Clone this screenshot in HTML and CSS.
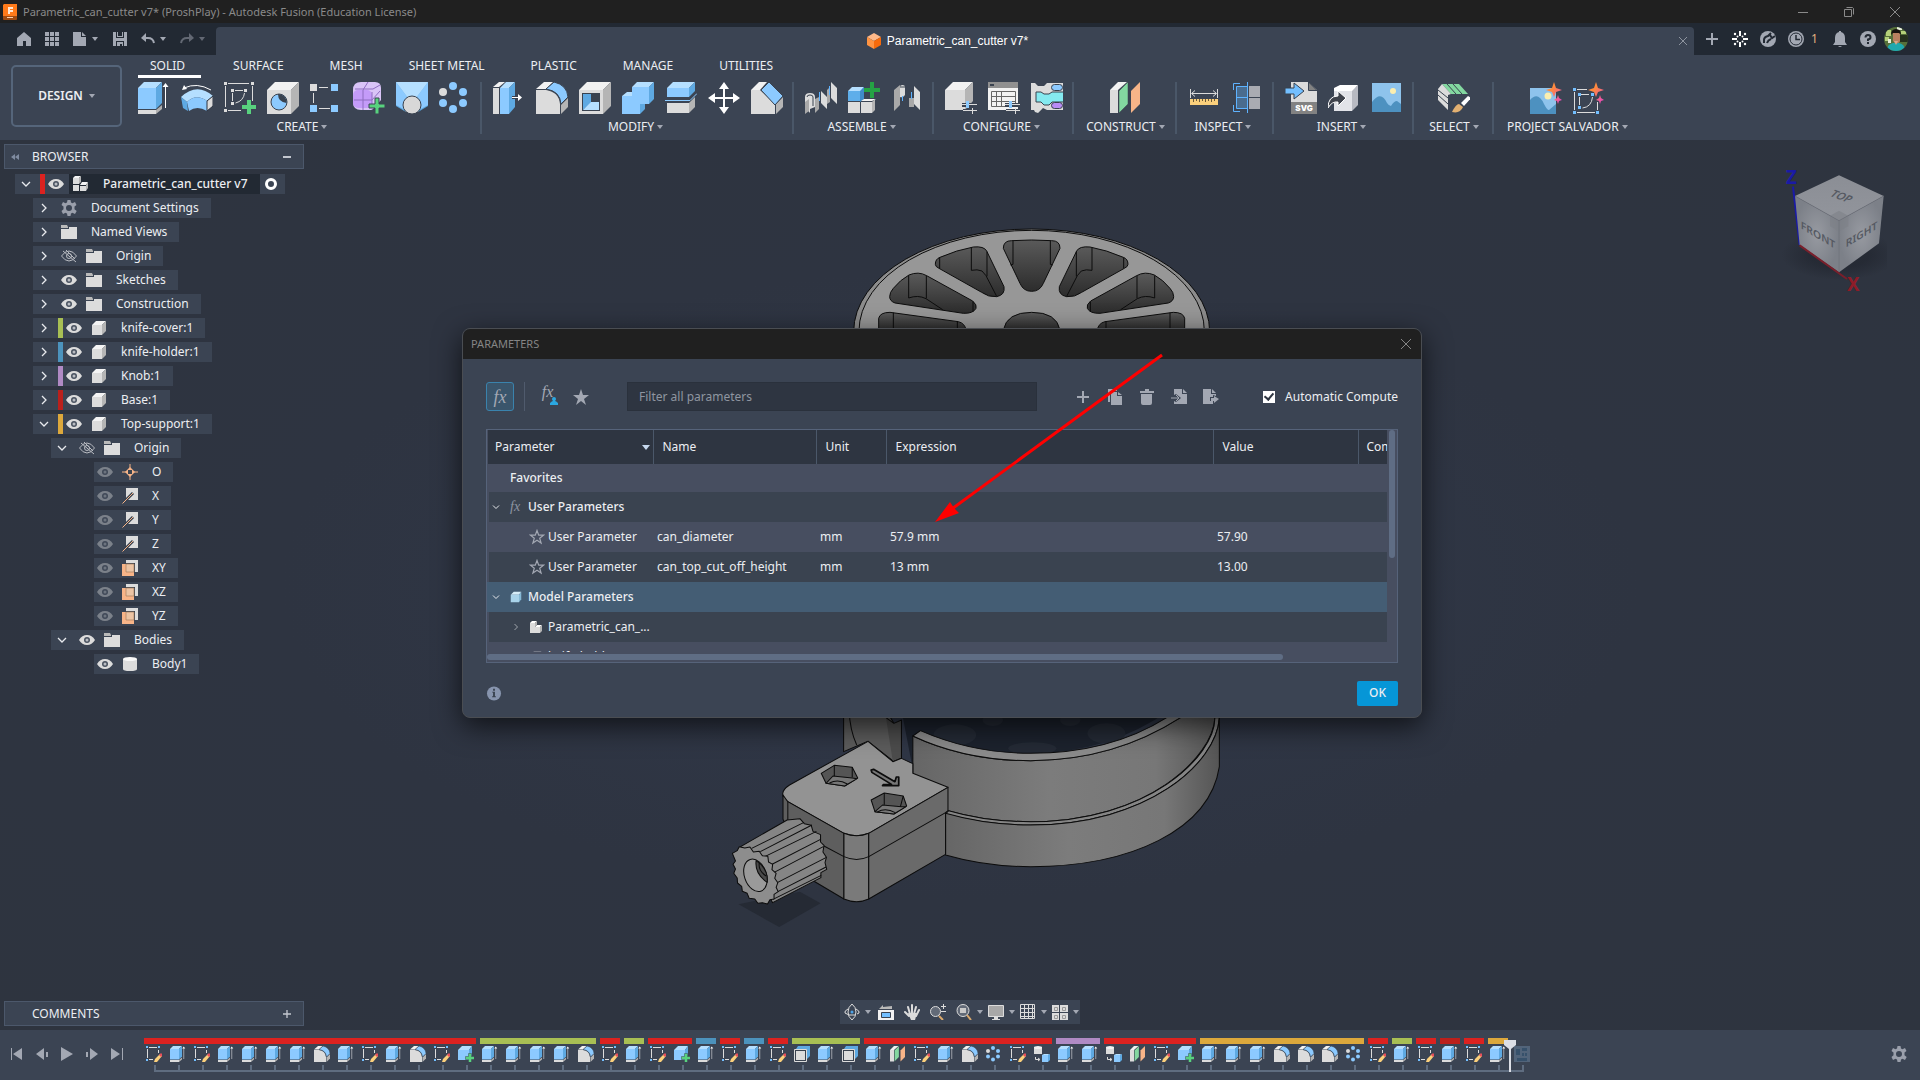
FILE: index.html
```html
<!DOCTYPE html>
<html lang="en">
<head>
<meta charset="utf-8">
<title>Parametric_can_cutter v7* (ProshPlay) - Autodesk Fusion (Education License)</title>
<link rel="stylesheet" href="styles.css">
</head>
<body>
<svg class="defs" aria-hidden="true">
  <defs>
    <linearGradient id="spark" x1="0" y1="0" x2="1" y2="1"><stop offset=".35" stop-color="#ff8a3c"/><stop offset="1" stop-color="#e83fd0"/></linearGradient>
    <linearGradient id="wall" x1="0" x2="1"><stop offset="0" stop-color="#666"/><stop offset=".45" stop-color="#7c7c7c"/><stop offset=".8" stop-color="#777"/><stop offset="1" stop-color="#555"/></linearGradient>
    <linearGradient id="pocket" x1="0" y1="0" x2="0" y2="1"><stop offset="0" stop-color="#5a5a5a"/><stop offset="1" stop-color="#2c2c2c"/></linearGradient>
    <linearGradient id="cubeTop" x1="0" y1="0" x2="0" y2="1"><stop offset="0" stop-color="#8b8e95"/><stop offset="1" stop-color="#92959c"/></linearGradient>
    <radialGradient id="cubeSide"><stop offset="0" stop-color="#979aa1"/><stop offset="1" stop-color="#7c8088"/></radialGradient>
    <radialGradient id="cubeShadow"><stop offset=".5" stop-color="#1d212a"/><stop offset="1" stop-color="#1d212a" stop-opacity="0"/></radialGradient>
  </defs>

  <symbol id="extrude" viewBox="0 0 32 32"><path fill="#b5dfff" d="M0 6 6 0h18l-6 6z"/><path fill="#8ccaff" d="M0 6h18v21H0z"/><path fill="#5ea9e2" d="m18 6 6-6v21l-6 6z"/><path fill="#dcdcdc" d="M0 28h18v4H0z"/><path fill="#b0b0b0" d="m18 28 6-5v4l-6 5z"/><path stroke="#fff" d="M27.500 4v22"/><path fill="#fff" d="m24.500 5 3-4 3 4z"/></symbol>
  <symbol id="revolve" viewBox="0 0 32 32"><path fill="#b5dfff" d="M0 15Q16 0 32 14l-6 5Q15 11 6 20z"/><path fill="#8ccaff" d="M6 20q9-9 20-1v10q-10-6-18 0z"/><path fill="#5ea9e2" d="m0 15 6 5 1 9-5-3z"/><path fill="#dcdcdc" stroke="#2b3340" d="m26 19 6-5v10l-6 5z"/><path fill="none" stroke="#fff" d="M3 6q13-6 27 2"/><path fill="#fff" d="m1 8 2-5 3 4z"/></symbol>
  <symbol id="sketch" viewBox="0 0 32 32"><path fill="none" stroke="#dcdcdc" d="M4 1.500h21M1.500 4v21M28.500 4v15M4 28.500h13M11 8.500h8M8.500 11v8M20.500 11q-1 8-9 10"/><path fill="#dcdcdc" d="M0 0h3v3H0zM27 0h3v3h-3zM0 27h3v3H0zM7 7h3v3H7zM20 7h3v3h-3zM7 20h3v3H7z"/><path fill="#58d27e" d="M23 18h4v5h5v4h-5v5h-4v-5h-5v-4h5z"/></symbol>
  <symbol id="hole" viewBox="0 0 32 32"><path fill="#f2f2f2" d="m0 8 8-8h24l-8 8z"/><path fill="#dcdcdc" d="M0 8h24v24H0z"/><path fill="#b5b5b5" d="m24 8 8-8v24l-8 8z"/><circle cx="12" cy="20" r="8" fill="#8ccaff" stroke="#39424f"/><path fill="#39424f" d="M11 12q0 8 8.500 9A8 8 0 0 0 11 12z"/></symbol>
  <symbol id="rectpat" viewBox="0 0 32 32"><path fill="#dcdcdc" d="M0 2h7v7H0zM9 5h9v1H9zM3 11h1v10H3zM9 26h11v1H9z"/><path fill="#8ccaff" d="M21 2h7v7h-7zM0 23h7v7H0zM21 23h7v7h-7z"/></symbol>
  <symbol id="form" viewBox="0 0 32 32"><path fill="#d9c4f7" d="M8 0h14q6 0 6 6v12q-8 10-10 10H8q-8 0-8-8V8q0-8 8-8z"/><rect y="8" width="19" height="18" rx="5" fill="#c49bf9"/><path fill="none" stroke="#8e6cc0" d="M1 18h18l8-9M10 8v20M10 8l5-8M19 10v16M2 7h18l7-4"/><path fill="#58d27e" stroke="#3b4453" d="M22 16h4v6h6v4h-6v6h-4v-6h-6v-4h6z"/></symbol>
  <symbol id="loft" viewBox="0 0 32 32"><path fill="#5ea9e2" d="M0 0h32v24L22 30H10L0 24z"/><path fill="#8ccaff" d="m0 0 12 16-3 12L0 23zM32 0 20 16l3 12 9-5z"/><path fill="#b5dfff" d="M0 0h32L20 16h-8z"/><circle cx="16" cy="23" r="9" fill="#d8d8d8" stroke="#39424f"/></symbol>
  <symbol id="circpat" viewBox="0 0 32 32"><g fill="#8ccaff"><circle cx="14" cy="4" r="4"/><circle cx="24" cy="10" r="4"/><circle cx="24" cy="21" r="4"/><circle cx="14" cy="27" r="4"/><circle cx="4" cy="21" r="4"/></g><circle cx="4" cy="10" r="4" fill="#dcdcdc"/></symbol>

  <symbol id="presspull" viewBox="0 0 32 32"><path fill="#dcdcdc" d="M0 6h6v26H0z"/><path fill="#f2f2f2" d="m0 5 6-5h6L6 5z"/><path fill="#b5dfff" d="m7 6 6-6h9l-6 6z"/><path fill="#8ccaff" d="M7 6h9v26H7z"/><path fill="#5ea9e2" d="m16 6 6-6v25l-6 7z"/><path stroke="#39424f" stroke-width="3" d="M19 15.500h9"/><path stroke="#fff" d="M19 15.500h8"/><path fill="#fff" d="m25 12 4 3.500-4 3.500z"/></symbol>
  <symbol id="fillet" viewBox="0 0 32 32"><path fill="#f2f2f2" d="m0 7 8-7h9l-7 7z"/><path fill="#dcdcdc" d="M0 8h10q13 2 14 14v10H0z"/><path fill="#b5b5b5" d="m25 23 7-7v9l-7 7z"/><path fill="#8ccaff" stroke="#39424f" d="m10 7 8-7q13 3 14 15l-7 7Q24 9 10 7z"/></symbol>
  <symbol id="shell" viewBox="0 0 32 32"><path fill="#f2f2f2" d="m0 8 8-8h24l-8 8z"/><path fill="#dcdcdc" d="M0 8h24v24H0z"/><path fill="#b5b5b5" d="m24 8 8-8v24l-8 8z"/><path fill="#39424f" d="M3 11h18v18H3z"/><path fill="#5ea9e2" d="m4 12 8 0v9l-8 7z"/><path fill="#b5dfff" d="m4 28 8-8h8v8z"/></symbol>
  <symbol id="combine" viewBox="0 0 32 32"><path fill="#b5dfff" d="m10 5 5-5h17l-5 5zM0 14l5-4h5v4z"/><path fill="#8ccaff" d="M0 14h10V5h17v17h-9v10H0z"/><path fill="#5ea9e2" d="m27 5 5-5v17l-5 5zM18 22h5v5l-5 5z"/></symbol>
  <symbol id="split" viewBox="0 0 32 32"><path fill="#b5dfff" d="m2 6 6-6h22l-6 6z"/><path fill="#8ccaff" d="M2 6h22v9H2z"/><path fill="#5ea9e2" d="m24 6 6-6v9l-6 6z"/><path fill="none" stroke="#8ccaff" d="M0 18.500h25l7-7"/><path fill="#dcdcdc" d="M2 21h22v10H2z"/><path fill="#b5b5b5" d="m24 21 6-6v10l-6 6z"/></symbol>
  <symbol id="move" viewBox="0 0 32 32"><path fill="#fff" d="m16 0 5 7h-4v8h8v-4l7 5-7 5v-4h-8v8h4l-5 7-5-7h4v-8H7v4l-7-5 7-5v4h8V7h-4z"/></symbol>
  <symbol id="chamfer" viewBox="0 0 32 32"><path fill="#f2f2f2" d="m0 8 8-8h8l-7 8z"/><path fill="#dcdcdc" d="M0 8h9l15 14v10H0z"/><path fill="#b5b5b5" d="m25 22 7-7v10l-7 7z"/><path fill="#8ccaff" stroke="#39424f" d="m10 8 8-8 14 14-8 9z"/></symbol>

  <symbol id="joint" viewBox="0 0 32 32"><path fill="#dcdcdc" d="M0 15q0-4 5-4t5 4v10l-5 2v4l-5-6zM16 9l6 6v12l-6-6zM26 0l6 6v16l-6-6z"/><path fill="#a9a9a9" d="m0 20 4-3v12l-4 3zM10 17l4-2v12l-4 4zM22 8l3-3v15l-3 2z"/><path fill="none" stroke="#39424f" d="M2 15q0-2 3-2t3 2v9"/><path stroke="#5eb3ff" d="M14.500 10v9M24.500 4v9"/></symbol>
  <symbol id="newcomp" viewBox="0 0 32 32"><path fill="#b5dfff" d="m0 9 4-4h12l-3 4z"/><path fill="#5eaeea" d="M0 9h12v10H0z"/><path fill="#3f8bc8" d="m12 9 4-4v12l-4 3z"/><path fill="#dcdcdc" d="M0 20h12v11H0zM13 20h11v11H13z"/><path fill="#f2f2f2" d="m13 19 3-2h12l-4 2z"/><path fill="#b5b5b5" d="m24 20 3-3v11l-3 3z"/><path fill="#25a244" d="M22 0h4v6h6v4h-6v6h-4v-6h-6V6h6z"/></symbol>
  <symbol id="asbuilt" viewBox="0 0 32 32"><path fill="#a9a9a9" d="m3 8 6-5v20l-6 6zM18 16h5v9h-5z"/><path fill="#dcdcdc" d="M9 5q0-2 2.500-2T14 5v8q-2 3-5 2zM23 4l6 6v18l-6-6z"/><path fill="none" stroke="#39424f" d="M9 5h5"/><path stroke="#5eb3ff" d="M11.500 14v5M20.500 10v7"/></symbol>

  <symbol id="cfgcube" viewBox="0 0 32 32"><path fill="#f2f2f2" d="m0 8 8-8h20l-8 8z"/><path fill="#dcdcdc" d="M0 8h20v20H0z"/><path fill="#b5b5b5" d="m20 8 8-8v19l-8 9z"/><path stroke="#3b4453" stroke-width="4" d="M17 23h15M18 29h14"/><path stroke="#dcdcdc" stroke-width="1" d="M17 22.500h15M18 28.500h14M27.500 26v6"/><path fill="#8ccaff" d="M21 19h3v7h-3z"/></symbol>
  <symbol id="cfgtable" viewBox="0 0 32 32"><path fill="#f2f2f2" d="M0 6h30v22H0z"/><path fill="#909090" d="M0 0h30v6H0z"/><path fill="#39424f" d="M2 2h4v2H2z"/><path fill="none" stroke="#666" d="M3.500 9.500h24v15h-24zM3 14.500h24M3 19.500h24M8.500 9v15M13.500 9v15"/><path stroke="#3b4453" stroke-width="4" d="M17 23h15M18 29h14"/><path stroke="#dcdcdc" d="M17 22.500h15M18 28.500h14M27.500 26v6"/><path fill="#8ccaff" d="M21 19h3v7h-3z"/></symbol>
  <symbol id="cfgrule" viewBox="0 0 32 32"><path fill="#dcdcdc" d="M0 1h4l3 3h6l3-3h16v27h-16l-4-2-5 5-3-1-1-2H0z"/><path fill="#85eaf0" stroke="#39424f" d="M5 10h5l3 2h5l3-2h12v10H21l-3 3h-5l-3-3H5z"/><rect x="20.500" y="2.500" width="11" height="6" rx="3" fill="#8ccaff" stroke="#39424f"/><rect x="20.500" y="20.500" width="11" height="6" rx="3" fill="#b98cf5" stroke="#39424f"/></symbol>
  <symbol id="plane" viewBox="0 0 32 32"><path fill="#f2f2f2" d="m0 8 8-8h9L8 8z"/><path fill="#dcdcdc" d="M0 8h8v23H0z"/><path fill="#83d8a0" stroke="#39424f" stroke-width=".500" d="m9 9 9-9v22l-9 9z"/><path fill="#f7b488" d="m21 9 9-9v22l-9 9z"/></symbol>
  <symbol id="measure" viewBox="0 0 32 32"><path fill="none" stroke="#dcdcdc" d="M2.500 7v9M29.500 7v9M4 11.500h24M7 8.500l-3.500 3L7 14.500M25 8.500l3.500 3-3.500 3"/><path fill="#fbd07c" d="M2 17h28v6H2z"/><path stroke="#6b5a38" d="M5.500 17v3M8.500 17v2M11.500 17v3M14.500 17v2M17.500 17v3M20.500 17v2M23.500 17v3M26.500 17v2"/></symbol>
  <symbol id="interf" viewBox="0 0 32 32"><path fill="#a9abb2" d="M18 4h11v11H18zM18 16h11v11H18z"/><path fill="#4a6c8e" stroke="#5eb3ff" d="M5.500 4.500h11v22h-11zM5 15.500h11"/><path fill="none" stroke="#5eb3ff" d="M2.500 8V1.500H9M2.500 23v6.500H9M16.500 0v31"/></symbol>
  <symbol id="insder" viewBox="0 0 32 32"><path fill="#fff" d="m6 6 6-3h18l-5 6H6z"/><path fill="#e2e3e8" d="M6 9h18v20H6z"/><path fill="#b8bac2" d="m24 9 6-6v20l-6 6z"/><path fill="#3f434c" stroke="#fff" d="M0 26q0-12 10-12V9l8 7-8 8v-4q-6-1-10 6z"/></symbol>
  <symbol id="image" viewBox="0 0 32 32"><path fill="#8ec3ec" d="M1 1h29v29H1z"/><path fill="#4d91c0" d="M1 20q9-12 15 1 2 3 4 3 3-5 6-5l4 3v8H1z"/><circle cx="22" cy="9" r="3" fill="#fbeeb0"/></symbol>
  <symbol id="select" viewBox="0 0 32 32"><path fill="#83d8a0" d="M4 2h17l9 10H13z"/><path fill="#dcdcdc" d="M4 2 0 7v11l10 10V13l3-1z"/><path fill="none" stroke="#39424f" d="m0 8 10 8M0 13l10 9M9 2l9 10M15 2l9 10"/><path fill="#e2b071" d="M14 30q4-8 7-8l4 3q-3 7-11 5z"/><path fill="#fff" d="m23 21 7-7 3 2-7 8z"/></symbol>
  <symbol id="aiimg" viewBox="0 0 32 32"><path fill="#8ec3ec" d="M0 6h26v26H0z"/><path fill="#4d91c0" d="M0 18q8-9 14 4 3 6 5 6l7-6v10H0z"/><circle cx="18" cy="14" r="3.500" fill="#fbeeb0"/><path fill="url(#spark)" d="m24 0 2 6 6 2-6 2-2 5-2-5-6-2 6-2zM28 13l1 3 3 2-3 1-1 3-1-3-3-1 3-2z"/></symbol>
  <symbol id="aisk" viewBox="0 0 32 32"><path fill="none" stroke="#dcdcdc" d="M4 7.500h10M1.500 10v18M4 30.500h18M24.500 20v8M8 12.500h8M6.500 15v8M19.500 15q-1 10-10 11"/><path fill="#73bfff" d="M0 6h3v3H0zM0 29h3v3H0zM23 29h3v3h-3zM5 11h3v3H5zM18 11h3v3h-3zM5 24h3v3H5z"/><path fill="url(#spark)" d="m23 0 2 6 6 2-6 2-2 5-2-5-6-2 6-2zM27 13l1 3 3 2-3 1-1 3-1-3-3-1 3-2z"/></symbol>

  <symbol id="tsketch" viewBox="0 0 16 16"><path fill="none" stroke="#dcdcdc" d="M3 1.500h8M1.500 3v9M3 13.500h4M12.500 4v3"/><path fill="#73bfff" d="M0 0h2v2H0zM12 0h2v2h-2zM0 13h2v2H0z"/><path fill="#fbd07c" d="m14 8 2 2-5 6-3 0 1-3z"/><path fill="#e8505b" d="m13 9 2-2 1 1v2l-1 1z"/></symbol>
  <symbol id="tcomp" viewBox="0 0 16 16"><path fill="#b5dfff" d="m0 4 4-4h10l-3 4z"/><path fill="#8ccaff" d="M0 4h11v10H0z"/><path fill="#5ea9e2" d="m11 4 3-4v9l-3 5z"/><path fill="#58d27e" stroke="#3b4453" stroke-width=".500" d="M10.500 7.500h3v3h3v3h-3v3h-3v-3h-3v-3h3z"/></symbol>
  <symbol id="tshell" viewBox="0 0 16 16"><path fill="#5ea9e2" d="m4 0h12v10l-4 4V3H2z"/><path fill="#39424f" stroke="#dcdcdc" d="M.500 3.500h12v12H.500z"/><path fill="#dcdcdc" d="M2 5h9v9H2z"/></symbol>
  <symbol id="tmove" viewBox="0 0 16 16"><path fill="#dcdcdc" d="M0 1h8v7H0z"/><ellipse cx="4" cy="1.500" rx="4" ry="1.500" fill="#f2f2f2"/><path fill="#8ccaff" d="M8 9h6v7H8z"/><path fill="#b5dfff" d="m8 9 2-1h6l-2 1z"/><path fill="#5ea9e2" d="m14 9 2-1v6l-2 2z"/><path fill="none" stroke="#dcdcdc" d="M1.500 11v2.500h4M4 12l2 1.500L4 15"/></symbol>
  <symbol id="tghost" viewBox="0 0 16 16"><path fill="#52647a" d="M0 0h16v16H0z"/><path fill="#37516b" d="M2 3h4v6H2zM8 2h5v3H8zM8 7h2v3H8zM11 7h2v3h-2zM3 12h10v3H3z"/></symbol>

  <symbol id="eye" viewBox="0 0 16 16"><path fill="#dcdcdc" d="M0 8q3-5 8-5t8 5q-3 5-8 5T0 8z"/><circle cx="8" cy="8" r="3" fill="#4a5361"/><circle cx="8" cy="8" r="1.500" fill="#b9bcc2"/></symbol>
  <symbol id="eyeoff" viewBox="0 0 16 16"><path fill="none" stroke="#b9bcc2" d="M.500 8Q4 3 8 3t7.500 5Q12 13 8 13T.500 8zM2 3l13 11M5 2l9 9"/><circle cx="8" cy="8" r="2.500" fill="none" stroke="#b9bcc2"/></symbol>
  <symbol id="folder" viewBox="0 0 16 16"><path fill="#b9b9b9" d="M0 1h6l1 2v1H0z"/><path fill="#dcdcdc" d="M0 5h8V3h8v12H0z"/></symbol>
  <symbol id="gear" viewBox="0 0 16 16"><path fill="#9a9fab" fill-rule="evenodd" d="M6.500 0h3l.500 2.500 1.500.700L14 2l1.500 3-2 1.500v2.800l2.200 1.700-1.700 3-2.500-1.200-1.500.700L9.500 16h-3L6 13.500l-1.500-.700L2 14 .500 11l2-1.700V6.500L.500 5 2 2l2.500 1.200L6 2.500zM8 5a3 3 0 1 0 0 6 3 3 0 0 0 0-6z"/></symbol>
  <symbol id="cube" viewBox="0 0 16 16"><path fill="#f4f4f4" d="m1 5 4-4h10l-4 4z"/><path fill="#dcdcdc" d="M1 5h10v10H1z"/><path fill="#b5b5b5" d="m11 5 4-4v10l-4 4z"/></symbol>
  <symbol id="assembly" viewBox="0 0 16 16"><path fill="#dcdcdc" d="M1 2h6v6H1zM1 9h6v6H1zM8 10h6v5H8z"/><path fill="#f4f4f4" d="m1 2 2-2h6L7 2zM8 9l2-3h6l-2 3z"/><path fill="#b5b5b5" d="m7 2 2-2v6L7 8zM14 9l2-3v6l-2 3z"/></symbol>
  <symbol id="origin" viewBox="0 0 16 16"><path fill="#f7b488" d="m8 3 5 5-5 5-5-5z"/><path stroke="#f7b488" d="M8 0v16M0 8h16"/><path fill="#39424f" d="M6 6h4v4H6z"/></symbol>
  <symbol id="axis" viewBox="0 0 16 16"><path fill="#dcdcdc" d="M4 0h12v12H4z"/><path stroke="#39424f" stroke-width="3" d="m4 12 7-7"/><path stroke="#f7b488" d="M.500 15.500 11 5"/></symbol>
  <symbol id="oplane" viewBox="0 0 16 16"><path fill="#dcdcdc" d="M4 0h12v12H4z"/><path fill="#39424f" d="M4 3h9v9H4z"/><path fill="#f7b488" d="M0 4h12v12H0z"/><path fill="#ecc4a4" stroke="#a87f60" stroke-width=".700" d="M4 4h8v8H4z"/></symbol>
  <symbol id="body" viewBox="0 0 16 16"><path fill="#dcdcdc" d="M1 3v10q0 2 7 2t7-2V3z"/><ellipse cx="8" cy="3" rx="7" ry="2" fill="#f8f8f8"/></symbol>
  <symbol id="right" viewBox="0 0 16 16"><path fill="none" stroke="#e8eaee" stroke-width="1.300" d="m6 4 4 4-4 4"/></symbol>
  <symbol id="down" viewBox="0 0 16 16"><path fill="none" stroke="#e8eaee" stroke-width="1.300" d="m4 6 4 4 4-4"/></symbol>
  <symbol id="cross" viewBox="0 0 10 10"><path fill="none" stroke="currentColor" d="m0 0 10 10M10 0 0 10"/></symbol>
  <symbol id="plus" viewBox="0 0 12 12"><path fill="currentColor" d="M5 0h2v5h5v2H7v5H5V7H0V5h5z"/></symbol>
  <symbol id="file" viewBox="0 0 14 14"><path fill="currentColor" d="M0 0h8v5h5v9H0zM9 0l4 4H9z"/></symbol>
</svg>

<header class="titlebar">
  <svg class="applogo" viewBox="0 0 14 16"><path fill="#a04a10" d="M0 11h14v4q0 1-1 1H1q-1 0-1-1z"/><path fill="#ff7a1a" d="M1 0h13v12H0V1z"/><path fill="#ffe6d2" d="M5 3h5v2H7v1h3v2H7v2H5z"/><path fill="#ffd2b0" d="M4 13h6v1H4z"/></svg>
  <h1>Parametric_can_cutter v7* (ProshPlay) - Autodesk Fusion (Education License)</h1>
  <div class="wincontrols">
    <button aria-label="Minimize"><svg viewBox="0 0 10 10"><path stroke="currentColor" d="M0 5.500h10"/></svg></button>
    <button aria-label="Restore"><svg viewBox="0 0 10 10"><path fill="none" stroke="currentColor" d="M.500 2.500h7v7h-7zM2.500.500h6l1 1v6"/></svg></button>
    <button aria-label="Close"><svg><use href="#cross"/></svg></button>
  </div>
</header>

<div class="appbar">
  <nav class="quick" aria-label="Quick access">
    <button class="q-home" aria-label="Home"><svg viewBox="0 0 14 14"><path fill="currentColor" d="m7 0 7 6v8H9V9H6v5H0V6z"/></svg></button>
    <button class="q-grid" aria-label="Data panel"><svg viewBox="0 0 14 14"><path fill="currentColor" d="M0 0h4v4H0zM5 0h4v4H5zM10 0h4v4h-4zM0 5h4v4H0zM5 5h4v4H5zM10 5h4v4h-4zM0 10h4v4H0zM5 10h4v4H5zM10 10h4v4h-4z"/></svg></button>
    <button class="q-file" aria-label="File"><svg><use href="#file"/></svg><i class="caret"></i></button>
    <button class="q-save" aria-label="Save"><svg viewBox="0 0 14 14"><path fill="currentColor" d="M0 0h3v6h8V0h3v14h-3V9H3v5H0zM4 0h1v4h4V0h1v5H4zM4 10h6v4H9v-2H7v2H4z"/></svg></button>
    <button class="q-undo" aria-label="Undo"><svg viewBox="0 0 14 14"><path fill="none" stroke="currentColor" stroke-width="2" d="M2 6h5q5 0 6 5"/><path fill="currentColor" d="M5 1v9L0 6z"/></svg><i class="caret"></i></button>
    <button class="q-redo" aria-label="Redo"><svg viewBox="0 0 14 14"><path fill="none" stroke="currentColor" stroke-width="2" d="M12 6H7q-5 0-6 5"/><path fill="currentColor" d="M9 1v9l5-4z"/></svg><i class="caret"></i></button>
  </nav>
  <div class="doctab">
    <div class="docname"><svg viewBox="0 0 14 16"><path fill="#ffb98a" d="m7 0 7 4-7 4-7-4z"/><path fill="#ff9442" d="m0 4 7 4v8l-7-4z"/><path fill="#f76b0c" d="m14 4-7 4v8l7-4z"/></svg><span>Parametric_can_cutter v7*</span></div>
    <button class="tabclose" aria-label="Close document"><svg><use href="#cross"/></svg></button>
  </div>
  <nav class="status" aria-label="Account">
    <button class="s-plus" aria-label="New tab"><svg><use href="#plus"/></svg></button>
    <button aria-label="Extensions"><svg viewBox="0 0 16 16"><path fill="none" stroke="#fff" stroke-width="2" d="M8 0v5M8 11v5M0 8h5M11 8h5"/><g fill="#fff"><circle cx="3" cy="3" r="1.200"/><circle cx="13" cy="3" r="1.200"/><circle cx="3" cy="13" r="1.200"/><circle cx="13" cy="13" r="1.200"/><circle cx="5.500" cy="5.500" r="1"/><circle cx="10.500" cy="5.500" r="1"/><circle cx="5.500" cy="10.500" r="1"/><circle cx="10.500" cy="10.500" r="1"/></g></svg></button>
    <button aria-label="Job status"><svg viewBox="0 0 16 16"><circle cx="8" cy="8" r="8" fill="#a3a8b3"/><path fill="none" stroke="#222933" stroke-width="2" d="M4 12V9q0-3 4-4l3-3M7 12q1-3 4-4M10 4l2 3 3-2"/></svg></button>
    <button class="s-clock"><svg viewBox="0 0 16 16"><circle cx="8" cy="8" r="8" fill="#a3a8b3"/><circle cx="8" cy="8" r="6" fill="none" stroke="#222933"/><path fill="none" stroke="#222933" stroke-width="1.500" d="M8 4v4.500h4"/></svg><span>1</span></button>
    <button aria-label="Notifications"><svg viewBox="0 0 16 16"><path fill="#a3a8b3" d="M7 0h2v1q4 1 4 6v4l2 3H1l2-3V7q0-5 4-6zM6 15h4q-2 2-4 0z"/></svg></button>
    <button class="s-help" aria-label="Help"><svg viewBox="0 0 16 16"><circle cx="8" cy="8" r="8" fill="#a3a8b3"/><path fill="none" stroke="#222933" stroke-width="2" d="M5.500 6.500Q5.500 4 8 4t2.500 2.200Q10.500 8 8 8.500V10M8 11v2"/></svg></button>
    <button class="avatar" aria-label="Profile"><svg viewBox="0 0 24 24"><path fill="#56703a" d="M0 0h24v24H0z"/><path fill="#b4cf7a" d="M2 3h5v6H2zM17 4h5v3h-5zM1 10h4v4H1z"/><path fill="#26301d" d="M16 8h8v7h-8z"/><path fill="#e9efdc" d="M13 0h5v3h-5zM4 12h3v4H4z"/><path fill="#1fa8ae" d="M3 24q0-7 6-8h6q6 1 6 8z"/><path fill="#b98160" d="M9 6h7v8q-3 5-7 0z"/><path fill="#d9a888" d="M10 14h4l-2 4z"/><path fill="#17130f" d="M7 8q0-6 5-6t5 6l-2-2H9z"/></svg></button>
  </nav>
</div>

<section class="ribbon">
  <button class="workspace">DESIGN <i class="caret"></i></button>
  <div class="ribbonmain">
    <nav class="tabs">
      <button class="active">SOLID</button><button>SURFACE</button><button>MESH</button><button>SHEET METAL</button><button>PLASTIC</button><button>MANAGE</button><button>UTILITIES</button>
    </nav>
    <div class="groups">
      <div class="group">
        <div class="tools"><button aria-label="Extrude"><svg><use href="#extrude"/></svg></button><button aria-label="Revolve"><svg><use href="#revolve"/></svg></button><button aria-label="Create Sketch"><svg><use href="#sketch"/></svg></button><button aria-label="Hole"><svg><use href="#hole"/></svg></button><button aria-label="Rectangular Pattern"><svg><use href="#rectpat"/></svg></button><button aria-label="Create Form"><svg><use href="#form"/></svg></button><button aria-label="Loft"><svg><use href="#loft"/></svg></button><button aria-label="Circular Pattern"><svg><use href="#circpat"/></svg></button></div>
        <button class="grouplabel">CREATE<i class="caret"></i></button>
      </div>
      <div class="group">
        <div class="tools"><button aria-label="Press Pull"><svg><use href="#presspull"/></svg></button><button aria-label="Fillet"><svg><use href="#fillet"/></svg></button><button aria-label="Shell"><svg><use href="#shell"/></svg></button><button aria-label="Combine"><svg><use href="#combine"/></svg></button><button aria-label="Split Body"><svg><use href="#split"/></svg></button><button aria-label="Move"><svg><use href="#move"/></svg></button><button aria-label="Chamfer"><svg><use href="#chamfer"/></svg></button></div>
        <button class="grouplabel">MODIFY<i class="caret"></i></button>
      </div>
      <div class="group">
        <div class="tools"><button aria-label="Joint"><svg><use href="#joint"/></svg></button><button aria-label="New Component"><svg><use href="#newcomp"/></svg></button><button aria-label="As-built Joint"><svg><use href="#asbuilt"/></svg></button></div>
        <button class="grouplabel">ASSEMBLE<i class="caret"></i></button>
      </div>
      <div class="group">
        <div class="tools"><button aria-label="Configure"><svg><use href="#cfgcube"/></svg></button><button aria-label="Configuration Table"><svg><use href="#cfgtable"/></svg></button><button aria-label="Rules"><svg><use href="#cfgrule"/></svg></button></div>
        <button class="grouplabel">CONFIGURE<i class="caret"></i></button>
      </div>
      <div class="group g-construct">
        <div class="tools"><button aria-label="Offset Plane"><svg><use href="#plane"/></svg></button></div>
        <button class="grouplabel">CONSTRUCT<i class="caret"></i></button>
      </div>
      <div class="group">
        <div class="tools"><button aria-label="Measure"><svg><use href="#measure"/></svg></button><button aria-label="Interference"><svg><use href="#interf"/></svg></button></div>
        <button class="grouplabel">INSPECT<i class="caret"></i></button>
      </div>
      <div class="group">
        <div class="tools"><button aria-label="Insert vector"><svg viewBox="0 0 32 32"><path fill="#dcdcdc" d="M6 0h17l9 8v24H6z"/><path fill="#828282" stroke="#3b4453" d="M23.500 0v8.500H32z"/><path fill="#828282" d="M6 20h26v12H6z"/><path fill="#73bfff" stroke="#39424f" d="M0 6h9V1l10 8-10 8v-5H0z"/><text x="19" y="29" text-anchor="middle" font-family="Inter, sans-serif" font-size="8" font-weight="900" fill="#fff">SVG</text></svg></button><button aria-label="Insert Derive"><svg><use href="#insder"/></svg></button><button aria-label="Canvas"><svg><use href="#image"/></svg></button></div>
        <button class="grouplabel">INSERT<i class="caret"></i></button>
      </div>
      <div class="group g-select">
        <div class="tools"><button aria-label="Select"><svg><use href="#select"/></svg></button></div>
        <button class="grouplabel">SELECT<i class="caret"></i></button>
      </div>
      <div class="group">
        <div class="tools"><button aria-label="Image assistant"><svg><use href="#aiimg"/></svg></button><button aria-label="Sketch assistant"><svg><use href="#aisk"/></svg></button></div>
        <button class="grouplabel">PROJECT SALVADOR<i class="caret"></i></button>
      </div>
    </div>
  </div>
</section>

<main class="viewport">
  <!-- 3D model; the viewBox origin is the window's top left corner plus (720, 220) -->
  <svg class="model" viewBox="720 220 520 710" aria-label="Can cutter model">
    <g transform="translate(840 215) scale(.33333)" stroke="#0c0c0c" stroke-width="3" stroke-linejoin="round">
      <ellipse cx="575" cy="350" rx="534" ry="308" fill="#8c8c8c"/>
      <ellipse cx="575" cy="348" rx="518" ry="302" fill="#979797"/>
      <g fill="url(#pocket)">
        <path d="M490 100q0-23 25-23 60-4 120 0 25 0 25 23l-50 105q-10 24-35 24t-35-24z"/>
        <path fill="none" d="M519 78v70l-8 2M631 78v70l7 2"/>
        <path d="M490 345q10-53 85-53t85 53z"/>
        <g id="pockets">
          <path d="M286 148q0-16 14-21 50-22 100-31 32-3 40 12l52 107q4 25-22 30-25 2-45-13L297 160q-11-5-11-12z"/>
          <path fill="none" d="M394 98v68q18-4 32 2l12 14 32 62M441 110v74M299 128v32"/>
          <path d="M149 245q0-13 11-25 20-25 47-40 28-12 53 2l138 76q14 12 10 22-8 16-38 15l-205-31q-16-6-16-19z"/>
          <path fill="none" d="M206 181v68q28-10 52 2l50 33M259 182v68M399 260v30"/>
          <path d="M116 345v-35q4-18 34-18l205 28q20 5 23 25z"/>
          <path fill="none" d="M160 293v50M352 320v20"/>
        </g>
        <use href="#pockets" transform="translate(1150 0) scale(-1 1)"/>
      </g>
    </g>
    <g transform="translate(700 690) scale(.3444 .33333)" stroke="#0c0c0c" stroke-width="3" stroke-linejoin="round">
      <path fill="#1c222d" stroke="none" d="M585 60h780q-180 130-405 130-170 0-320-68l-25 100z"/>
      <g fill="#242a35" stroke="none"><ellipse cx="740" cy="135" rx="62" ry="32"/><ellipse cx="965" cy="175" rx="70" ry="18"/><ellipse cx="1180" cy="130" rx="55" ry="30"/><ellipse cx="850" cy="90" rx="30" ry="18"/><ellipse cx="1075" cy="90" rx="30" ry="18"/></g>
      <path fill="#252a34" stroke="none" d="m112 643 118 68 120-71-60-35z"/>
      <path fill="#5c5c5c" d="M417 60h123l23 40v115l-75-61-71 31z"/>
      <path fill="none" d="M433 60q2 60 22 105"/>
      <path fill="#4c4c4c" d="m540 83 23 17 22-10v115l-25 10"/>
      <path fill="url(#wall)" d="M618 138q152 74 342 74 240 0 435-129l0-25h104l-4 25c-5 117-195 312-535 312q-130 0-240-33l-102-112z"/>
      <path fill="#8b8b8b" d="M640 122q150 68 320 68 230 0 395-107v-20h60l-20 20q-195 129-435 129-190 0-342-74z"/>
      <path fill="#858585" d="M722 362q108 33 238 33c340 0 535-195 535-312h13c-8 137-208 322-548 322q-130 0-247-33z"/>
      <path fill="url(#wall)" d="M713 370q117 35 247 35c340 0 540-185 548-322v147c-28 190-258 300-548 300q-130 0-247-35z"/>
      <path fill="#939393" d="m488 154 72 61 25-10 33 16v29l102 42-230 138q-35 15-72 0L255 335q-32-25 5-50z"/>
      <path fill="#5e5e5e" d="m241 315 14 20 163 95v197l-93-57-84-182z"/>
      <path fill="none" d="M255 335v60"/>
      <path fill="#7a7a7a" d="M418 430q37 15 72 0v197q-35 16-72 0z"/>
      <path fill="#6a6a6a" d="m490 430 230-138v70l-7 6v125L490 627z"/>
      <path fill="none" d="m360 468 58 32q37 17 72 0l223-132"/>
      <path fill="#555" d="m352 250 38-24 52 6 16 32-38 24-54-8z"/>
      <path fill="#777" d="m366 280 20-22 56 6 14 2-36 22z"/><path fill="none" d="M390 226v32M442 232v30M376 279q25-14 52 3"/>
      <path fill="#555" d="m497 330 38-21 55 9 10 30-37 24-55-7z"/>
      <path fill="#777" d="m508 365 22-20 55 5 13 0-35 22z"/><path fill="none" d="M535 309v35M590 318l-8 32M515 366q24-14 52 2"/>
      <path fill="#777" stroke-width="5" d="m497 240 7-2 62 37 4-14 7 0v26h-47l2-3 24-1-57-36z"/>
      <path fill="#858585" d="m118 470 135-80 37-4 13 15 20 5 5 18 22 10 0 22 10 10-3 20 10 16-4 16 5 20-17 10v15l-140 75z"/>
      <path fill="none" d="m150 475 152-78M175 485l150-80M188 500l150-76M205 525l145-77M214 548l144-78M220 580l147-78M226 605l140-74M212 628l140-72"/>
      <path fill="#8d8d8d" d="m94 490 14-8 6-12 16 4 15-3 10 15 17-2 9 13 16 2 2 17 12 7-2 16 12 11-4 15 9 13-5 14 6 13-12 8 0 14-12 2-7 13-15-4-13 2-9-13-16-2-6-15-14-6-2-15-12-10-1-15-10-14 5-13-7-14 7-10z"/>
      <ellipse cx="161" cy="556" rx="32" ry="50" fill="#9a9a9a" transform="rotate(-18 161 556)"/>
      <path fill="#4a4a4a" d="M163 512q-5 38 32 65 4-40-32-65z"/><path fill="none" d="M172 520q-3 22 20 38"/>
    </g>
  </svg>

  <svg class="viewcube" viewBox="0 0 330 420" aria-label="View cube">
    <g transform="translate(-1130 -480)">
      <ellipse cx="1318" cy="765" rx="175" ry="75" fill="url(#cubeShadow)" opacity=".500"/>
      <path stroke="#1a1aa6" stroke-width="6" d="m1178 560 20 175"/>
      <path fill="url(#cubeTop)" d="m1316 526 134 62-134 74-132-74z"/>
      <path fill="url(#cubeSide)" d="m1184 588 132 74v155l-118-82z"/>
      <path fill="url(#cubeSide)" d="m1450 588-134 74v155l120-87z"/>
      <path fill="#7d8087" opacity=".600" d="m1289 647 27-15 28 15v32l-28 15-27-15z"/>
      <path fill="none" stroke="#6c7078" stroke-width="2" d="m1184 588 132 74 134-74M1316 662v155"/>
      <path stroke="#7a1f2b" stroke-width="6" d="m1198 736 142 101"/>
      <g font-family="Noto Sans, sans-serif" font-weight="600" fill="#555962" text-anchor="middle">
        <text font-size="32" transform="translate(1315 598) rotate(20) skewX(-24)">TOP</text>
        <text font-size="31" transform="translate(1253 716) skewY(31)">FRONT</text>
        <text font-size="31" transform="translate(1384 714) skewY(-31)">RIGHT</text>
      </g>
      <g font-family="Noto Sans, sans-serif" font-size="56" font-weight="700" text-anchor="middle">
        <text x="1173" y="552" fill="#1a1aa6">Z</text><text x="1359" y="873" fill="#8e1c28">X</text>
      </g>
    </g>
  </svg>

  <aside class="browser">
    <div class="panelhead"><svg class="collapse" viewBox="0 0 8 6"><path fill="#7f8ba0" d="m4 0-4 3 4 3zM8 0 4 3l4 3z"/></svg><h2>BROWSER</h2><button aria-label="Collapse"><svg viewBox="0 0 8 8"><path fill="currentColor" d="M0 3h8v2H0z"/></svg></button></div>
    <ul class="tree">
      <li class="root"><svg class="tw"><use href="#down"/></svg><i class="swatch red"></i><svg class="eye"><use href="#eye"/></svg><span class="rootname"><svg><use href="#assembly"/></svg><b>Parametric_can_cutter v7</b></span><i class="radio"></i></li>
      <li class="l1"><svg class="tw"><use href="#right"/></svg><svg><use href="#gear"/></svg><span class="far">Document Settings</span></li>
      <li class="l1"><svg class="tw"><use href="#right"/></svg><svg><use href="#folder"/></svg><span class="far">Named Views</span></li>
      <li class="l1"><svg class="tw"><use href="#right"/></svg><svg><use href="#eyeoff"/></svg><svg><use href="#folder"/></svg><span>Origin</span></li>
      <li class="l1"><svg class="tw"><use href="#right"/></svg><svg><use href="#eye"/></svg><svg><use href="#folder"/></svg><span>Sketches</span></li>
      <li class="l1"><svg class="tw"><use href="#right"/></svg><svg><use href="#eye"/></svg><svg><use href="#folder"/></svg><span>Construction</span></li>
      <li class="l1 comp"><svg class="tw"><use href="#right"/></svg><i class="swatch olive"></i><svg><use href="#eye"/></svg><svg><use href="#cube"/></svg><span>knife-cover:1</span></li>
      <li class="l1 comp"><svg class="tw"><use href="#right"/></svg><i class="swatch blue"></i><svg><use href="#eye"/></svg><svg><use href="#cube"/></svg><span>knife-holder:1</span></li>
      <li class="l1 comp"><svg class="tw"><use href="#right"/></svg><i class="swatch purple"></i><svg><use href="#eye"/></svg><svg><use href="#cube"/></svg><span>Knob:1</span></li>
      <li class="l1 comp"><svg class="tw"><use href="#right"/></svg><i class="swatch darkred"></i><svg><use href="#eye"/></svg><svg><use href="#cube"/></svg><span>Base:1</span></li>
      <li class="l1 comp"><svg class="tw"><use href="#down"/></svg><i class="swatch orange"></i><svg><use href="#eye"/></svg><svg><use href="#cube"/></svg><span>Top-support:1</span></li>
      <li class="l2"><svg class="tw"><use href="#down"/></svg><svg><use href="#eyeoff"/></svg><svg><use href="#folder"/></svg><span>Origin</span></li>
      <li class="l3 dim"><svg><use href="#eye"/></svg><svg><use href="#origin"/></svg><span>O</span></li>
      <li class="l3 dim"><svg><use href="#eye"/></svg><svg><use href="#axis"/></svg><span>X</span></li>
      <li class="l3 dim"><svg><use href="#eye"/></svg><svg><use href="#axis"/></svg><span>Y</span></li>
      <li class="l3 dim"><svg><use href="#eye"/></svg><svg><use href="#axis"/></svg><span>Z</span></li>
      <li class="l3 dim"><svg><use href="#eye"/></svg><svg><use href="#oplane"/></svg><span>XY</span></li>
      <li class="l3 dim"><svg><use href="#eye"/></svg><svg><use href="#oplane"/></svg><span>XZ</span></li>
      <li class="l3 dim"><svg><use href="#eye"/></svg><svg><use href="#oplane"/></svg><span>YZ</span></li>
      <li class="l2"><svg class="tw"><use href="#down"/></svg><svg><use href="#eye"/></svg><svg><use href="#folder"/></svg><span>Bodies</span></li>
      <li class="l3"><svg><use href="#eye"/></svg><svg><use href="#body"/></svg><span>Body1</span></li>
    </ul>
  </aside>

  <div class="lowerbar">
    <div class="panelhead comments"><h2>COMMENTS</h2><button aria-label="Add comment"><svg><use href="#plus"/></svg></button></div>
    <nav class="viewnav" aria-label="Navigation">
      <button aria-label="Orbit"><svg viewBox="0 0 16 16"><path fill="none" stroke="#dcdcdc" d="M8 0Q4 3 4 8t4 8q4-3 4-8T8 0zM4 5Q0 7 1 9q3 3 10 2M12 5q4 2 3 4l-2 1"/><circle cx="8" cy="8" r="1.500" fill="#4da3e8"/></svg></button><i class="caret"></i>
      <button aria-label="Look at"><svg viewBox="0 0 16 16"><path fill="#b9b9b9" d="M1 5 5 1v2l9-1v3z"/><path fill="#f2f2f2" d="M0 6h16v10H0z"/><path fill="#73bfff" stroke="#39424f" d="M3.500 8.500h9v5h-9z"/></svg></button>
      <button aria-label="Pan"><svg viewBox="0 0 16 16"><path fill="none" stroke="#dcdcdc" stroke-width="2" stroke-linecap="round" d="m4 3 2 7M8 1v9M12 3l-2 7M15 6l-3 6M1 8l4 4"/><path fill="#dcdcdc" d="M4 9h9l-2 7H7z"/></svg></button>
      <button aria-label="Zoom"><svg viewBox="0 0 16 16"><circle cx="5.500" cy="7.500" r="5" fill="#626a77" stroke="#dcdcdc"/><path stroke="#dcdcdc" d="M11 2.500h5M13.500 0v5M11 7.500h5"/><path stroke="#d9a86c" stroke-width="2" d="m9 12 4 4"/></svg></button>
      <button aria-label="Fit"><svg viewBox="0 0 16 16"><circle cx="7" cy="6.500" r="6" fill="#626a77" stroke="#dcdcdc"/><path fill="#c9c9c9" d="M4 4h6v5H4z"/><path stroke="#d9a86c" stroke-width="2" d="m11 11 4 5"/></svg></button><i class="caret"></i>
      <button aria-label="Display settings"><svg viewBox="0 0 16 16"><path fill="#a8a8a8" stroke="#dcdcdc" d="M.500 1.500h15v11H.500z"/><path fill="#dcdcdc" d="M6 13h4v2h2v1H4v-1h2z"/></svg></button><i class="caret"></i>
      <button aria-label="Grid settings"><svg viewBox="0 0 16 16"><path fill="none" stroke="#dcdcdc" d="M.500.500h14v14H.500zM4.500 0v15M8.500 0v15M12.500 0v15M0 4.500h15M0 8.500h15M0 12.500h15"/></svg></button><i class="caret"></i>
      <button aria-label="Viewports"><svg viewBox="0 0 16 16"><path fill="#dcdcdc" d="M0 1h7v7H0zM8 1h8v7H8zM0 9h7v7H0zM8 9h8v7H8z"/><path fill="none" stroke="#999" d="M2.500 3.500h3v3h-3zM10.500 3.500h3v3h-3zM2.500 11.500h3v3h-3zM10.500 11.500h3v3h-3z"/></svg></button><i class="caret"></i>
    </nav>
  </div>

  <section class="dialog" role="dialog" aria-labelledby="dlgtitle">
    <header><h2 id="dlgtitle">PARAMETERS</h2><button aria-label="Close"><svg><use href="#cross"/></svg></button></header>
    <div class="dlgtools">
      <button class="fx on">fx</button>
      <i class="rule"></i>
      <button class="fx user">fx<svg viewBox="0 0 8 8"><path fill="#2ba7e0" d="M0 8V6q2-2 3-2-1-1-1-2 0-2 2-2t2 2q0 1-1 2 1 0 3 2v2z"/></svg></button>
      <button class="star" aria-label="Favorites"><svg viewBox="0 0 16 16"><path fill="#a3a8b3" d="m8 0 2 6h6l-5 4 2 6-5-4-5 4 2-6-5-4h6z"/></svg></button>
      <input class="filter" type="text" placeholder="Filter all parameters" aria-label="Filter all parameters">
      <div class="actions">
        <button aria-label="Add"><svg class="small"><use href="#plus"/></svg></button>
        <button aria-label="Copy"><svg viewBox="0 0 16 16"><path fill="currentColor" d="M1 0h9v2H3v11H1zM4 3h6v4h5v9H4zM11 3l4 3h-4z"/></svg></button>
        <button aria-label="Delete"><svg viewBox="0 0 16 16"><path fill="currentColor" d="M1 2h5V0h4v2h5v2H1zM2 5h11v9q0 2-2 2H4q-2 0-2-2z"/></svg></button>
        <button aria-label="Import"><svg viewBox="0 0 16 16"><path fill="currentColor" d="M3 0h8v5h5v10H3v-3l2 1 5-4-5-4-2 1zM12 0l4 4h-4z"/><path fill="none" stroke="currentColor" d="M0 9h8M5 6l3 3-3 3"/></svg></button>
        <button aria-label="Export"><svg viewBox="0 0 16 16"><path fill="currentColor" d="M0 0h8v5h5v2l-3-1v2H7v4h3v3H0zM9 0l4 4H9zM8 9h3V7l5 3-5 4v-2H8z"/></svg></button>
      </div>
      <label class="auto"><input type="checkbox" checked>Automatic Compute</label>
    </div>
    <div class="grid">
      <div class="scroller">
        <table>
          <colgroup><col class="c1"><col class="c2"><col class="c3"><col class="c4"><col class="c5"><col class="c6"></colgroup>
          <thead><tr><th><span class="sorted">Parameter<i class="caret"></i></span></th><th>Name</th><th>Unit</th><th>Expression</th><th>Value</th><th>Comments</th></tr></thead>
          <tbody>
            <tr class="alt fav"><td colspan="6"><div class="cell fav">Favorites</div></td></tr>
            <tr><td colspan="6"><div class="cell head"><svg><use href="#down"/></svg><em>fx</em>User Parameters</div></td></tr>
            <tr class="alt"><td><div class="cell leaf"><svg viewBox="0 0 16 16"><path fill="none" stroke="#a3a8b3" stroke-width="1.200" d="m8 1.500 1.700 4.700h4.800l-3.800 3 1.400 4.900L8 11.200l-4.100 2.900 1.400-4.900-3.800-3h4.800z"/></svg>User Parameter</div></td><td>can_diameter</td><td>mm</td><td>57.9 mm</td><td>57.90</td><td></td></tr>
            <tr><td><div class="cell leaf"><svg viewBox="0 0 16 16"><path fill="none" stroke="#a3a8b3" stroke-width="1.200" d="m8 1.500 1.700 4.700h4.800l-3.800 3 1.400 4.900L8 11.200l-4.100 2.900 1.400-4.900-3.800-3h4.800z"/></svg>User Parameter</div></td><td>can_top_cut_off_height</td><td>mm</td><td>13 mm</td><td>13.00</td><td></td></tr>
            <tr class="selected"><td colspan="6"><div class="cell head"><svg><use href="#down"/></svg><svg class="mp" viewBox="0 0 16 16"><path fill="#d6edf8" d="m1 5 4-4h10l-3 4z"/><path fill="#a9d3ea" d="M1 5h11v10H1z"/><path fill="#86b9d6" d="m12 5 3-4v10l-3 4z"/></svg>Model Parameters</div></td></tr>
            <tr><td><div class="cell sub"><svg><use href="#right"/></svg><svg class="mp" viewBox="0 0 12 12"><path fill="#dcdcdc" d="M0 2h5v4h5v6H0z"/><path fill="#fff" d="m0 2 2-2h5L5 2zM5 6l2-2h5l-2 2z"/><path fill="#b5b5b5" d="m5 2 2-2v4L5 6zM10 6l2-2v6l-2 2z"/></svg>Parametric_can_...</div></td><td></td><td></td><td></td><td></td><td></td></tr>
            <tr class="alt"><td colspan="6"><div class="cell sub last"><svg class="mp"><use href="#cube"/></svg>knife-holder:1</div></td></tr>
          </tbody>
        </table>
      </div>
      <div class="vtrack"><i></i></div>
      <div class="htrack"><i></i></div>
    </div>
    <footer>
      <svg class="info" viewBox="0 0 16 16"><circle cx="8" cy="8" r="7.500" fill="#8794ad"/><path fill="#39424f" d="M7 3h2v2H7zM6 6h3v5h1v1H6v-1h1V7H6z"/></svg>
      <button class="ok">OK</button>
    </footer>
    <svg class="pointer" viewBox="0 0 240 180"><path stroke="#f00" stroke-width="3" d="M231 5 14 164"/><path fill="#f00" d="m4 172 15-20 4 6 5 5z"/></svg>
  </section>
</main>

<footer class="timelinebar">
  <div class="playback">
    <button aria-label="Start"><svg viewBox="0 0 12 12"><path fill="currentColor" d="M0 0h1v12H0zM11 0v12L2 6z"/></svg></button>
    <button aria-label="Previous"><svg viewBox="0 0 12 12"><path fill="currentColor" d="M8 0v12L0 6zM10 4h2v5h-2z"/></svg></button>
    <button aria-label="Play"><svg class="big" viewBox="0 0 12 14"><path fill="currentColor" d="m0 0 12 7-12 7z"/></svg></button>
    <button aria-label="Next"><svg viewBox="0 0 12 12"><path fill="currentColor" d="m4 0 8 6-8 6zM0 4h2v5H0z"/></svg></button>
    <button aria-label="End"><svg viewBox="0 0 12 12"><path fill="currentColor" d="m0 0 9 6-9 6zM11 0h1v12h-1z"/></svg></button>
  </div>
  <div class="timeline">
    <div class="feature-groups">
      <div class="fg red"><svg><use href="#tsketch"/></svg><svg><use href="#extrude"/></svg><svg><use href="#tsketch"/></svg><svg><use href="#extrude"/></svg><svg><use href="#extrude"/></svg><svg><use href="#extrude"/></svg><svg><use href="#extrude"/></svg><svg><use href="#fillet"/></svg><svg><use href="#extrude"/></svg><svg><use href="#tsketch"/></svg><svg><use href="#extrude"/></svg><svg><use href="#fillet"/></svg><svg><use href="#tsketch"/></svg><svg><use href="#tcomp"/></svg></div>
      <div class="fg olive"><svg><use href="#extrude"/></svg><svg><use href="#extrude"/></svg><svg><use href="#extrude"/></svg><svg><use href="#extrude"/></svg><svg><use href="#fillet"/></svg></div>
      <div class="fg red"><svg><use href="#tsketch"/></svg></div>
      <div class="fg olive"><svg><use href="#extrude"/></svg></div>
      <div class="fg red"><svg><use href="#tsketch"/></svg><svg><use href="#tcomp"/></svg></div>
      <div class="fg blue"><svg><use href="#extrude"/></svg></div>
      <div class="fg red"><svg><use href="#tsketch"/></svg></div>
      <div class="fg blue"><svg><use href="#extrude"/></svg></div>
      <div class="fg red"><svg><use href="#tsketch"/></svg></div>
      <div class="fg olive"><svg><use href="#tshell"/></svg><svg><use href="#extrude"/></svg><svg><use href="#tshell"/></svg></div>
      <div class="fg red"><svg><use href="#extrude"/></svg><svg><use href="#plane"/></svg><svg><use href="#tsketch"/></svg><svg><use href="#extrude"/></svg><svg><use href="#fillet"/></svg><svg><use href="#circpat"/></svg><svg><use href="#tsketch"/></svg><svg><use href="#tmove"/></svg></div>
      <div class="fg purple"><svg><use href="#extrude"/></svg><svg><use href="#extrude"/></svg></div>
      <div class="fg red"><svg><use href="#tmove"/></svg><svg><use href="#plane"/></svg><svg><use href="#tsketch"/></svg><svg><use href="#tcomp"/></svg></div>
      <div class="fg orange"><svg><use href="#extrude"/></svg><svg><use href="#extrude"/></svg><svg><use href="#extrude"/></svg><svg><use href="#fillet"/></svg><svg><use href="#fillet"/></svg><svg><use href="#fillet"/></svg><svg><use href="#circpat"/></svg></div>
      <div class="fg red"><svg><use href="#tsketch"/></svg></div>
      <div class="fg olive"><svg><use href="#extrude"/></svg></div>
      <div class="fg red"><svg><use href="#tsketch"/></svg></div>
      <div class="fg darkred"><svg><use href="#extrude"/></svg></div>
      <div class="fg red"><svg><use href="#tsketch"/></svg></div>
      <div class="fg orange"><svg><use href="#extrude"/></svg></div>
      <div class="fg none"><svg><use href="#tghost"/></svg></div>
    </div>
    <div class="track"></div>
    <svg class="marker" viewBox="0 0 12 32"><path fill="#dcdfe6" d="M0 0h12v5L7 9v23H5V9L0 5z"/></svg>
  </div>
  <button class="settings" aria-label="Timeline settings"><svg><use href="#gear"/></svg></button>
</footer>
</body>
</html>
```
FILE: styles.css
```css
* { box-sizing: border-box; }

:root {
  --panel: #3b4453;
  --canvas: #2e3440;
  --dark: #222933;
  --icon: #a3a8b3;
  --text: #eceef2;
  --red: #db2220;
  --olive: #a8bf54;
  --blue: #4c93bd;
  --purple: #b08ac4;
  --darkred: #bb201c;
  --orange: #dca83c;
}

body {
  margin: 0;
  min-height: 100vh;
  display: flex;
  flex-direction: column;
  background: var(--canvas);
  color: var(--text);
  font: 12px/16px "Noto Sans", sans-serif;
  overflow-x: hidden;
}

button {
  margin: 0;
  padding: 0;
  border: 0;
  background: none;
  color: inherit;
  font: inherit;
  display: flex;
  align-items: center;
}

h1, h2 { margin: 0; font-size: 11px; font-weight: 400; }
svg { display: block; flex: none; }
ul { margin: 0; padding: 0; list-style: none; }
.defs { position: absolute; width: 0; height: 0; }

.caret {
  flex: none;
  border: 3px solid transparent;
  border-top: 4px solid var(--icon);
  border-bottom: 0;
}

.red { --c: var(--red); }
.olive { --c: var(--olive); }
.blue { --c: var(--blue); }
.purple { --c: var(--purple); }
.darkred { --c: var(--darkred); }
.orange { --c: var(--orange); }
.none { --c: transparent; }

/* Title bar */
.titlebar {
  height: 23px;
  display: flex;
  align-items: center;
  gap: 6px;
  padding: 0 20px 0 3px;
  background: #202020;
  color: #8a8a8a;
}
.applogo { width: 14px; height: 16px; }
.wincontrols { margin-left: auto; display: flex; gap: 36px; }
.wincontrols svg { width: 10px; height: 10px; }

/* Quick access, document tab, account */
.appbar { height: 32px; display: flex; background: var(--dark); color: var(--icon); }
.quick { width: 216px; padding-left: 17px; display: flex; align-items: center; gap: 14px; }
.quick button { gap: 5px; }
.quick svg { width: 14px; height: 14px; }
.q-file { margin-right: 1px; }
.q-undo, .q-redo { gap: 7px; }
.q-redo { opacity: .5; }
.doctab {
  flex: 1;
  align-self: flex-end;
  height: 28px;
  display: flex;
  align-items: center;
  padding-right: 7px;
  background: var(--panel);
  border-radius: 4px 4px 0 0;
  color: #fff;
}
.docname {
  flex: 1;
  display: flex;
  justify-content: center;
  align-items: center;
  gap: 6px;
  font: 12px/16px "Liberation Sans", sans-serif;
}
.docname svg { width: 14px; height: 16px; }
.tabclose { color: var(--icon); }
.tabclose svg { width: 8px; height: 8px; }
.status { width: 226px; display: flex; align-items: center; gap: 12px; padding-left: 12px; }
.status svg { width: 16px; height: 16px; }
.s-plus { margin-right: 2px; }
.status .s-plus svg { width: 12px; height: 12px; }
.s-clock { gap: 7px; color: #e0b080; margin-right: 2px; }
.avatar { border-radius: 12px; overflow: hidden; margin-left: -4px; }
.status .avatar svg { width: 24px; height: 24px; }

/* Ribbon */
.ribbon { height: 85px; display: flex; background: var(--panel); padding-left: 11px; }
.workspace {
  width: 111px;
  height: 62px;
  margin: 10px 16px 0 0;
  justify-content: center;
  gap: 6px;
  border: 2px solid #55657a;
  border-radius: 5px;
  font-weight: 600;
}
.tabs { display: flex; height: 23px; }
.tabs button { height: 23px; padding: 3px 23px 0; border-bottom: 3px solid transparent; align-items: flex-start; }
.tabs button.active { padding-left: 12px; padding-right: 16px; margin-right: 9px; border-color: #fff; }
.groups { display: flex; margin-top: 4px; }
.group { display: flex; flex-direction: column; align-items: center; padding: 0 9px 0 11px; height: 52px; border-right: 2px solid #4a5768; }
.group:first-child { padding-left: 0; }
.group:last-child { border: 0; padding-left: 13px; }
.tools { display: flex; gap: 11px; }
.tools svg { width: 32px; height: 32px; }
.grouplabel { margin-top: 5px; margin-right: 5px; gap: 3px; }
.g-construct { width: 103px; }
.g-select { width: 80px; }
.g-construct .grouplabel, .g-select .grouplabel, .group:last-child .grouplabel { margin-right: 0; }

/* Canvas */
.viewport {
  flex: 1;
  min-height: 640px;
  position: relative;
  display: flex;
  flex-direction: column;
  justify-content: space-between;
  padding: 4px;
  background: radial-gradient(ellipse at center, #30384a 0, #2e3441 50%, #2e343f 100%);
}
.model { position: absolute; left: calc(50% - 240px); top: 80px; width: 520px; height: 710px; }
.viewcube { position: absolute; right: 33px; top: 20px; width: 110px; height: 140px; }

.browser { position: relative; align-self: flex-start; }
.panelhead {
  width: 300px;
  height: 25px;
  display: flex;
  align-items: center;
  padding: 0 12px 0 6px;
  background: var(--panel);
  border: 1px solid #4c586b;
}
.panelhead h2 { margin-left: 13px; flex: 1; font-size: 12px; }
.panelhead button { color: #c3c7cf; }
.panelhead button svg { width: 8px; height: 8px; }
.collapse { width: 8px; height: 6px; }
.comments h2 { margin-left: 21px; }

.tree { padding-top: 5px; display: flex; flex-direction: column; align-items: flex-start; gap: 4px; }
.tree li { height: 20px; display: flex; align-items: center; background: var(--panel); padding-right: 12px; }
.tree svg { width: 16px; height: 16px; }
.tree li svg + svg { margin-left: 9px; }
.tree li span { margin-left: 14px; white-space: nowrap; }
.tree .l1 { margin-left: 29px; padding-left: 3px; }
.tree .l2 { margin-left: 47px; padding-left: 3px; }
.tree .l3 { margin-left: 90px; padding-left: 3px; }
.tree .dim svg:first-child { opacity: .4; }
.swatch { width: 5px; height: 20px; background: var(--c); }
.tree .comp .swatch { margin: 0 3px 0 6px; }
.tree .root { margin-left: 11px; padding: 0; }
.root .tw { margin: 0 6px 0 3px; }
.root .eye { margin: 0 5px 0 3px; }
.tree .root .rootname { width: 191px; height: 20px; margin: 0; padding-left: 3px; display: flex; align-items: center; gap: 15px; background: var(--dark); }
.rootname b { font-weight: 500; font-size: 12px; }
.radio { width: 12px; height: 12px; margin: 0 8px 0 5px; border: 3px solid #fff; border-radius: 6px; }

.lowerbar { position: relative; display: grid; grid-template-columns: 1fr auto 1fr; align-items: start; }
.viewnav { height: 24px; width: 240px; display: flex; align-items: center; gap: 10px; padding-left: 4px; background: var(--panel); margin-top: -1px; }
.viewnav svg { width: 16px; height: 16px; }
.viewnav .caret { margin: 0 -5px; }
.viewnav .caret:first-of-type { margin-right: -3px; }

/* Parameters window */
.dialog {
  position: absolute;
  left: calc(50% - 498px);
  top: 188px;
  width: 960px;
  background: var(--panel);
  border: 1px solid #4a4d52;
  border-radius: 8px;
  box-shadow: 0 8px 28px #000a;
}
.dialog > header {
  height: 30px;
  display: flex;
  align-items: center;
  justify-content: space-between;
  padding: 0 10px 0 8px;
  background: #202020;
  border-radius: 7px 7px 0 0;
  color: #858585;
}
.dialog > header svg { width: 10px; height: 10px; }
.dlgtools { display: flex; align-items: center; margin: 23px 23px 18px; height: 29px; }
.fx { width: 28px; height: 29px; justify-content: center; font: italic 18px/20px "Liberation Serif", serif; color: var(--icon); }
.fx.on { background: #3a556b; border: 1px solid #3a83ad; border-radius: 3px; }
.rule { width: 1px; height: 29px; margin: 0 12px 0 10px; background: #505b6d; }
.fx.user { font-size: 16px; width: 26px; align-items: flex-start; }
.fx.user svg { width: 8px; height: 8px; align-self: center; margin-top: 8px; margin-left: -3px; }
.star { margin-left: 10px; }
.star svg { width: 16px; height: 16px; }
.filter {
  width: 410px;
  height: 29px;
  margin-left: 38px;
  padding: 0 11px;
  border: 1px solid #2a313c;
  background: #2e3541;
  color: var(--text);
  font: inherit;
}
.filter::placeholder { color: #8f95a0; }
.actions { flex: 1; display: flex; gap: 16px; margin-left: 38px; color: var(--icon); }
.actions svg { width: 16px; height: 16px; }
.actions svg.small { width: 12px; height: 12px; margin: 2px; }
.auto { display: flex; align-items: center; gap: 10px; }
.auto input { appearance: none; width: 12px; height: 12px; margin: 0; background: #fff; display: grid; place-items: center; }
.auto input:checked::after { content: ""; width: 4px; height: 7px; margin-top: -2px; border: solid #2e3541; border-width: 0 2px 2px 0; transform: rotate(40deg); }

.grid {
  display: grid;
  grid-template-columns: 1fr 10px;
  grid-template-rows: 222px 10px;
  margin: 0 23px;
  border: 1px solid #56637a;
  background: #474e60;
}
.scroller { overflow: hidden; }
.scroller table { width: 100%; table-layout: fixed; border-collapse: collapse; }
.c1 { width: 165px; }
.c2 { width: 163px; }
.c3 { width: 70px; }
.c4 { width: 327px; }
.c5 { width: 145px; }
.scroller th { height: 34px; padding: 0 0 0 9px; text-align: left; font-weight: 400; background: #2e3541; border-left: 1px solid #4b586a; white-space: nowrap; overflow: hidden; }
.scroller th:first-child { border-left: 0; padding-left: 7px; }
.scroller th:last-child { padding-left: 8px; }
.sorted { display: flex; align-items: center; justify-content: space-between; padding-right: 3px; }
.sorted .caret { border-width: 5px 4px 0; border-top-color: #c6d8ee; }
.scroller td { height: 30px; padding: 0 0 0 4px; background: #3a4350; white-space: nowrap; overflow: hidden; }
.scroller td:first-child { padding-left: 0; border-left: 2px solid #474e60; }
.scroller .alt td { background: #474e60; }
.scroller .fav td { height: 28px; }
.scroller .selected td { background: #445d74; border-color: #445d74; }
.cell { display: flex; align-items: center; font-weight: 400; }
.cell svg { width: 16px; height: 16px; }
.cell.fav { padding-left: 21px; font-weight: 500; }
.cell.head { font-weight: 500; }
.cell.head svg:first-child { width: 12px; height: 12px; margin: 0 8px 0 1px; }
.cell em { width: 18px; font: italic 14px/16px "Liberation Serif", serif; color: #8e95a2; }
.cell svg.mp { width: 12px; height: 12px; margin-right: 6px; }
.cell.leaf { padding-left: 40px; gap: 3px; }
.cell.sub { padding-left: 21px; }
.cell.sub svg:first-child { width: 12px; height: 12px; margin-right: 8px; opacity: .6; }
.cell.sub.last { padding-left: 41px; }
.cell.sub.last svg:first-child { margin-right: 6px; opacity: 1; }
.vtrack i { display: block; width: 6px; height: 128px; margin-left: 2px; border-radius: 3px; background: #5f6d84; }
.htrack i { display: block; width: 796px; height: 6px; margin-top: 2px; border-radius: 3px; background: #5f6d84; }
.dialog > footer { display: flex; justify-content: space-between; align-items: center; margin: 17px 23px 11px; height: 26px; }
.info { width: 16px; height: 15px; }
.ok { width: 41px; height: 25px; justify-content: center; background: #0696d7; border-radius: 2px; font-weight: 500; }
.pointer { position: absolute; left: 468px; top: 21px; width: 240px; height: 180px; pointer-events: none; }

/* Timeline */
.timelinebar { height: 50px; display: flex; align-items: flex-start; background: var(--panel); padding: 0 13px 0 11px; }
.playback { display: flex; align-items: center; gap: 13px; width: 133px; height: 48px; color: var(--icon); }
.playback svg { width: 12px; height: 12px; }
.playback svg.big { height: 14px; }
.timeline { position: relative; padding-top: 8px; }
.feature-groups { display: flex; gap: 4px; }
.fg { display: flex; gap: 8px; padding: 2px 2px 8px; border-top: 6px solid var(--c); background: repeating-linear-gradient(90deg, transparent 0 10px, #5f6d80 10px 12px, transparent 12px 24px) bottom / 100% 5px no-repeat; }
.fg svg { width: 16px; height: 16px; }
.track { height: 2px; margin: 0 8px 0 10px; background: #5f6d80; }
.marker { position: absolute; right: 16px; top: 10px; width: 12px; height: 32px; }
.settings { margin: 16px 0 0 auto; }
.settings svg { width: 16px; height: 16px; }
```
